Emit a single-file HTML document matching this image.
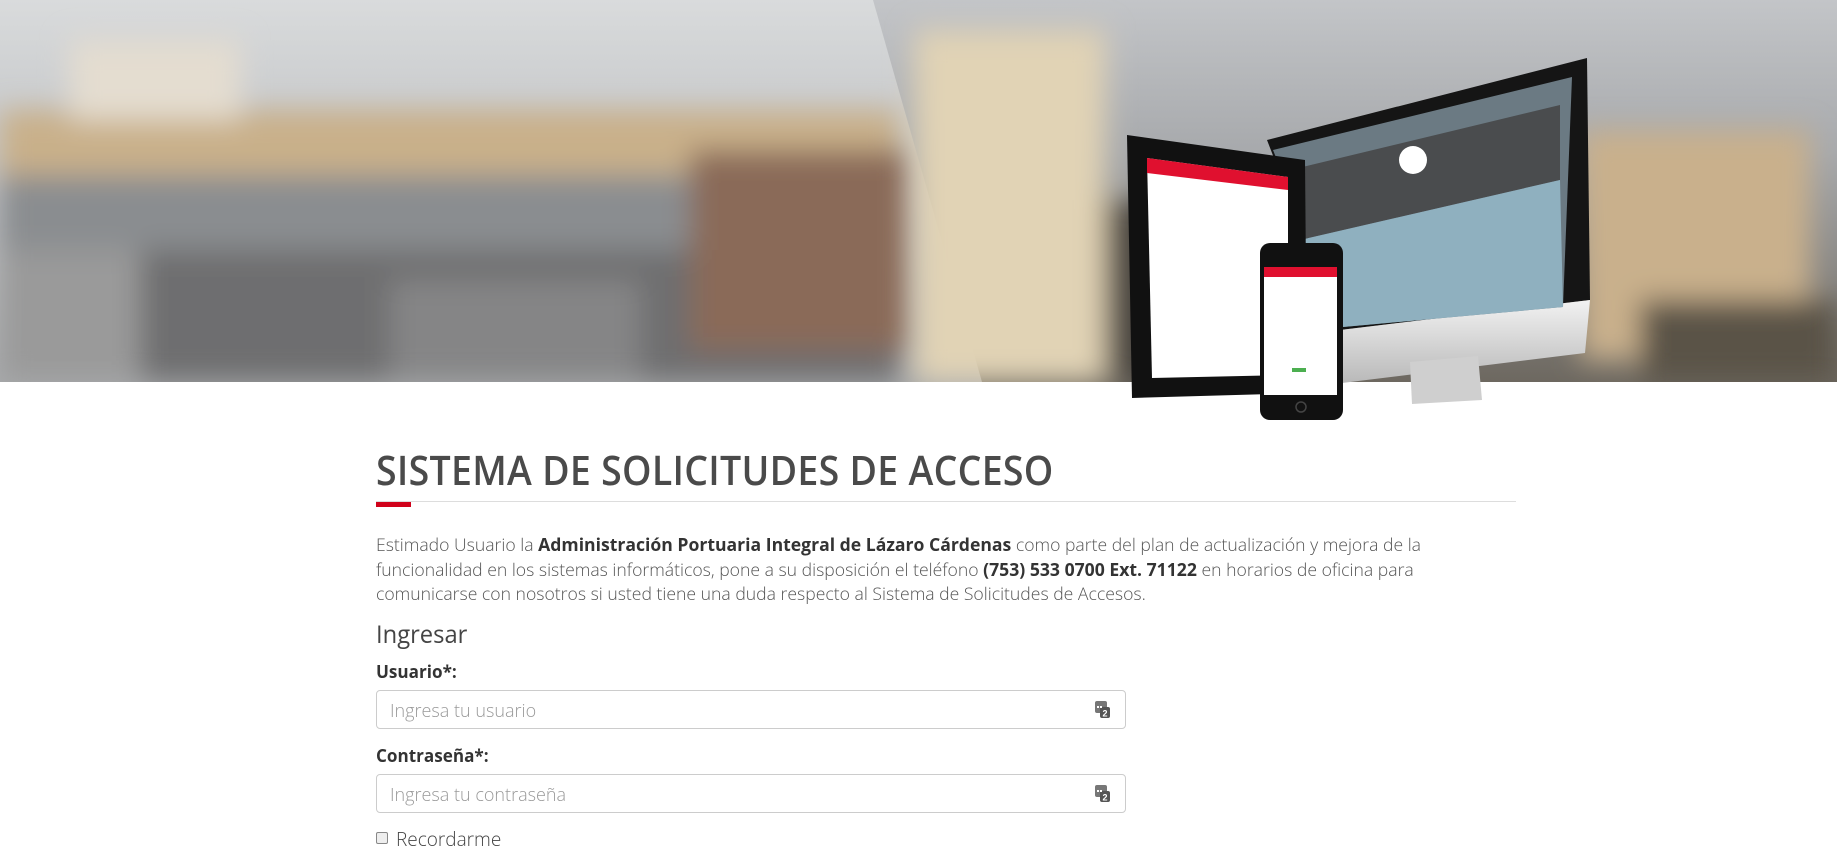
<!DOCTYPE html>
<html><head><meta charset="utf-8"><style>
html,body{margin:0;padding:0;background:#fff;width:1837px;height:852px;overflow:hidden;font-family:"Open Sans","Liberation Sans",sans-serif;color:#555}
#hdr{position:absolute;left:0;top:0;width:1837px;height:430px}
h1{position:absolute;left:376px;top:446px;margin:0;font-weight:600;font-size:41px;line-height:48px;color:#4a4a4a;white-space:nowrap;transform:scaleX(0.915);transform-origin:left top;letter-spacing:0.3px}
.line{position:absolute;left:376px;top:501px;width:1140px;height:1px;background:#ddd}
.red{position:absolute;left:376px;top:502px;width:35px;height:5px;background:#d0021b}
.p{position:absolute;left:376px;top:533px;font-size:17.6px;line-height:24.6px;color:#555;white-space:nowrap;font-weight:300}
.p b{color:#333;font-weight:bold}
.h3{position:absolute;left:376px;top:617px;font-size:25px;color:#444;transform:scaleX(0.95);transform-origin:left top}
.lab{position:absolute;left:376px;font-size:18px;font-weight:bold;color:#333;transform:scaleX(0.95);transform-origin:left top}
.inp{position:absolute;left:376px;width:748px;height:37px;border:1px solid #ccc;border-radius:4px;background:#fff}
.inp span{position:absolute;left:13px;top:8px;font-size:18px;color:#999;font-weight:300;white-space:nowrap}
.ic{position:absolute;left:718px;top:10px;width:15px;height:17px}
</style></head><body>
<svg id="hdr" width="1837" height="430" viewBox="0 0 1837 430">
<defs>
<filter id="b" x="-10%" y="-10%" width="120%" height="120%"><feGaussianBlur stdDeviation="14"/></filter>
<clipPath id="cp"><rect width="1837" height="382"/></clipPath>
<linearGradient id="sky" x1="0" y1="0" x2="0" y2="1"><stop offset="0" stop-color="#d9dbdc"/><stop offset="0.3" stop-color="#c9cbcd"/><stop offset="1" stop-color="#a9abad"/></linearGradient>
<linearGradient id="sky2" x1="0" y1="0" x2="0" y2="1"><stop offset="0" stop-color="#c3c5c8"/><stop offset="0.4" stop-color="#a7a9ac"/><stop offset="1" stop-color="#6d6860"/></linearGradient>
<linearGradient id="chin" x1="0" y1="0" x2="0" y2="1"><stop offset="0" stop-color="#f2f2f2"/><stop offset="1" stop-color="#b9b9b9"/></linearGradient>
</defs>
<g clip-path="url(#cp)">
<rect width="1837" height="382" fill="url(#sky)"/>
<g filter="url(#b)">
<rect x="0" y="110" width="900" height="70" fill="#c9b08a"/>
<rect x="70" y="40" width="170" height="80" fill="#e4ddd0"/>
<rect x="0" y="175" width="700" height="80" fill="#8a8d90"/>
<rect x="0" y="250" width="900" height="132" fill="#6e6e6f"/>
<rect x="690" y="150" width="220" height="200" fill="#8a6b58"/>
<rect x="0" y="250" width="140" height="132" fill="#9a9a9a"/>
<rect x="390" y="280" width="250" height="102" fill="#858586"/>
</g>
<polygon points="873,0 1837,0 1837,382 982,382" fill="url(#sky2)"/>
<g filter="url(#b)">
<rect x="915" y="30" width="190" height="352" fill="#e1d3b5"/>
<rect x="1580" y="130" width="230" height="230" fill="#c9b08c"/>
<rect x="1105" y="200" width="150" height="182" fill="#4a4540"/>
<rect x="1640" y="300" width="197" height="82" fill="#5a5346"/>
</g>
</g>
<!-- monitor -->
<polygon points="1267,140 1587,58 1590,300 1340,330" fill="#151515"/>
<polygon points="1340,330 1590,300 1585,353 1342,383" fill="url(#chin)"/>
<polygon points="1410,362 1478,356 1482,400 1412,404" fill="#cfcfcf"/>
<polygon points="1273,150 1572,77 1563,307 1343,327" fill="#6b7a83"/>
<polygon points="1290,170 1560,105 1560,180 1300,240" fill="#4a4c4e"/>
<polygon points="1300,240 1560,180 1563,307 1343,327" fill="#8fb0bf"/>
<circle cx="1413" cy="160" r="14" fill="#fff"/>
<!-- tablet -->
<polygon points="1127,135 1305,160 1307,393 1132,398" fill="#111"/>
<polygon points="1147,158 1288,177 1288,375 1152,378" fill="#fff"/>
<polygon points="1147,158 1288,177 1288,190 1147,173" fill="#e0102f"/>
<!-- phone -->
<rect x="1260" y="243" width="83" height="177" rx="10" fill="#111"/>
<rect x="1264" y="267" width="73" height="128" fill="#fff"/>
<rect x="1264" y="267" width="73" height="10" fill="#e0102f"/>
<rect x="1292" y="368" width="14" height="4" fill="#4caf50"/>
<circle cx="1301" cy="407" r="5" fill="none" stroke="#444" stroke-width="1.5"/>
</svg>
<h1>SISTEMA DE SOLICITUDES DE ACCESO</h1>
<div class="line"></div><div class="red"></div>
<div class="p">Estimado Usuario la <b>Administración Portuaria Integral de Lázaro Cárdenas</b> como parte del plan de actualización y mejora de la<br>funcionalidad en los sistemas informáticos, pone a su disposición el teléfono <b>(753) 533 0700 Ext. 71122</b> en horarios de oficina para<br>comunicarse con nosotros si usted tiene una duda respecto al Sistema de Solicitudes de Accesos.</div>
<div class="h3">Ingresar</div>
<div class="lab" style="top:660px">Usuario*:</div>
<div class="inp" style="top:690px"><span>Ingresa tu usuario</span><svg class="ic" viewBox="0 0 15 17"><rect x="0" y="0" width="12" height="12" rx="2" fill="#777"/><rect x="5" y="6" width="10" height="11" rx="2" fill="#555"/><text x="7.5" y="15.5" font-size="9" font-weight="bold" fill="#fff" font-family="Liberation Sans">2</text><rect x="2" y="5" width="2" height="2" fill="#fff"/><rect x="5" y="5" width="2" height="2" fill="#fff"/></svg></div>
<div class="lab" style="top:744px">Contraseña*:</div>
<div class="inp" style="top:774px"><span>Ingresa tu contraseña</span><svg class="ic" viewBox="0 0 15 17"><rect x="0" y="0" width="12" height="12" rx="2" fill="#777"/><rect x="5" y="6" width="10" height="11" rx="2" fill="#555"/><text x="7.5" y="15.5" font-size="9" font-weight="bold" fill="#fff" font-family="Liberation Sans">2</text><rect x="2" y="5" width="2" height="2" fill="#fff"/><rect x="5" y="5" width="2" height="2" fill="#fff"/></svg></div>
<div style="position:absolute;left:376px;top:832px;width:10px;height:10px;border:1px solid #888;border-radius:2px;background:#eee"></div>
<div style="position:absolute;left:396px;top:826px;font-size:19px;color:#444;font-weight:300">Recordarme</div>
</body></html>
